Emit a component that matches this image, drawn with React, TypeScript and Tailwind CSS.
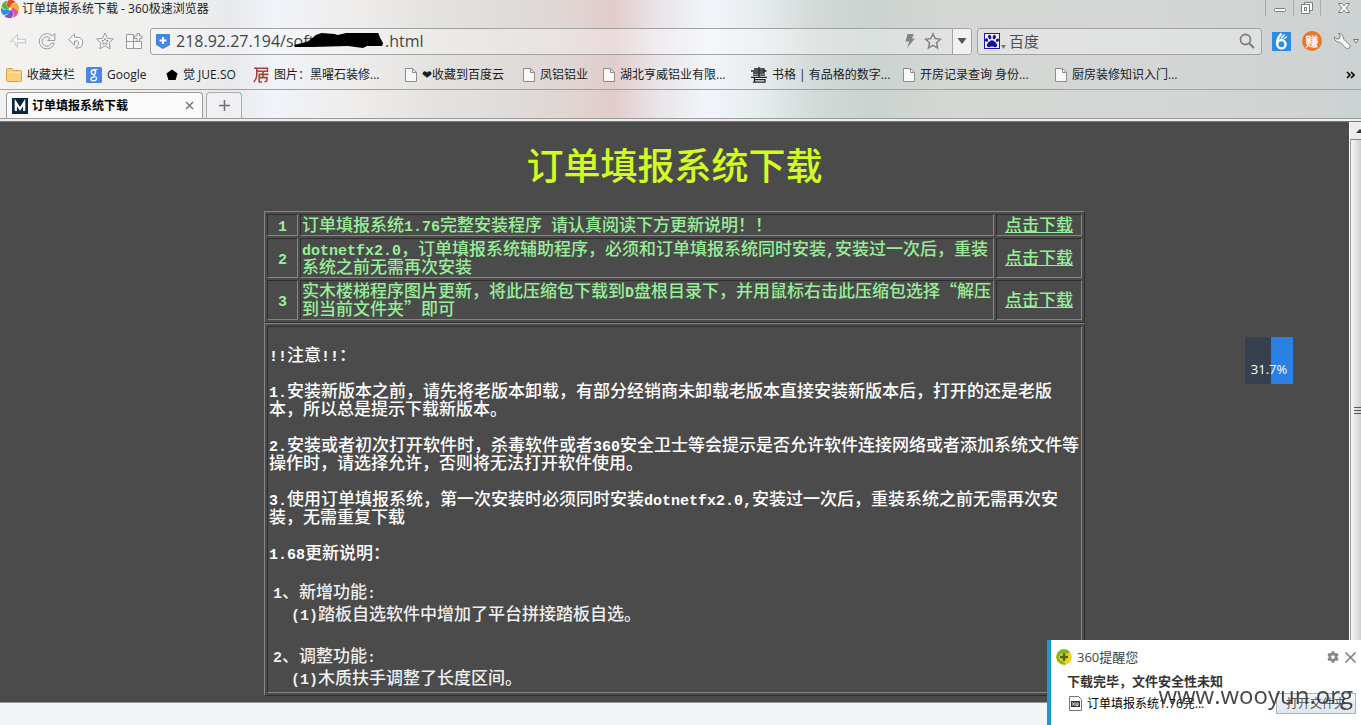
import React from "react";
import { FaPaw, FaCog } from "react-icons/fa";

const UI = "font-['Open_Sans','Noto_Sans_CJK_SC',sans-serif]";
const SONG = "font-['Noto_Sans_CJK_SC',sans-serif] font-medium";

/* Sets runs of half-width characters in a fixed-pitch face beside the full-width text. */
function Mixed({ children }: { children: string }) {
  const parts = children.split(/([\x20-\x7e]+)/).filter(Boolean);
  return (
    <>
      {parts.map((p, i) =>
        /^[\x20-\x7e]/.test(p) ? (
          <span key={i} className="font-['Liberation_Mono',monospace] text-[15px] leading-[0px] font-bold">
            {p}
          </span>
        ) : (
          <React.Fragment key={i}>{p}</React.Fragment>
        ),
      )}
    </>
  );
}

function Pinwheel() {
  const colors = ["#e8452c", "#f2b21b", "#e9569b", "#8b4fc0", "#2f8be0", "#5cb531"];
  return (
    <svg viewBox="-10 -10 20 20" className="size-[18px] shrink-0" aria-hidden="true">
      {colors.map((c, i) => (
        <path
          key={c}
          d="M0 0 C-2 -4 -1 -7 3 -9.4 C7 -8.5 9.2 -5.5 9.2 -3 C6 -5 3 -4 0 0Z"
          fill={c}
          transform={`rotate(${i * 60 - 30})`}
        />
      ))}
      <circle r="1.6" fill="#fff" />
    </svg>
  );
}

function PageIcon() {
  return (
    <svg viewBox="0 0 12 14" className="h-3.5 w-3 shrink-0" aria-hidden="true">
      <path d="M.5 .5H7.5L11.5 4.5V13.5H.5Z" fill="#f8f8f8" stroke="#8d8d8d" />
      <path d="M7.5 .5V4.5H11.5" fill="none" stroke="#8d8d8d" />
    </svg>
  );
}

function FolderIcon() {
  return (
    <svg viewBox="0 0 16 14" className="h-3.5 w-4 shrink-0" aria-hidden="true">
      <path d="M.5 1.5Q.5 .5 1.5 .5H6L7.5 2.5H14.5Q15.5 2.5 15.5 3.5V12.5Q15.5 13.5 14.5 13.5H1.5Q.5 13.5 .5 12.5Z" fill="#fbd078" stroke="#d9a043" />
      <path d="M1 4.5H15" stroke="#fde6ae" />
    </svg>
  );
}

function GoogleIcon() {
  return (
    <svg viewBox="0 0 16 16" className="size-4 shrink-0" aria-hidden="true">
      <rect width="16" height="16" rx="1.5" fill="#4a86e8" />
      <g fill="none" stroke="#fff">
        <ellipse cx="7.4" cy="5.2" rx="2.1" ry="2.3" strokeWidth="1.4" />
        <path d="M7.4 2.7H11.2M8.8 7.2Q7.2 8.2 8.8 9.2Q10.8 10.2 10.6 11.6" strokeWidth="1.2" />
        <path d="M10.6 11.6Q10.2 13.8 7.6 13.8Q4.8 13.6 4.9 11.8Q5.2 9.9 8.6 9.8" strokeWidth="1.3" />
      </g>
    </svg>
  );
}

function PentagonIcon() {
  return (
    <svg viewBox="0 0 12 12" className="size-3 shrink-0" aria-hidden="true">
      <path d="M6 .5L11.6 4.6L9.6 11H2.4L.4 4.6Z" fill="#000" />
    </svg>
  );
}

function SealIcon() {
  return (
    <svg viewBox="0 0 16 16" className="size-4 shrink-0" fill="none" stroke="#a8413a" strokeWidth="1.6" aria-hidden="true">
      <path d="M1 1.3H14.5V4.3H3.8M3.8 1.3V8Q3.5 12.5 .8 15M5.8 7.4H15.5M10 4.3V10.6M5.8 10.6H14V13Q13.8 15 11.5 14.8M6.2 7.4V15H9" />
    </svg>
  );
}

function BookIcon() {
  return (
    <svg viewBox="0 0 16 16" className="size-4 shrink-0" fill="none" stroke="#222" strokeWidth="1.3" aria-hidden="true">
      <path d="M3 2H13V6H2M0 4H15.5M2 8.2H14M0 10.3H16M8 0V10M4 12.7H14V15.2H2M3.5 10.5V15" />
    </svg>
  );
}

const bookmarks: { label: string; icon: React.ReactNode; width: string }[] = [
  { label: "收藏夹栏", icon: <FolderIcon />, width: "w-20" },
  { label: "Google", icon: <GoogleIcon />, width: "w-20" },
  { label: "觉 JUE.SO", icon: <PentagonIcon />, width: "w-[87px]" },
  { label: "图片：黑曜石装修...", icon: <SealIcon />, width: "w-[152px]" },
  { label: "❤收藏到百度云", icon: <PageIcon />, width: "w-[118px]" },
  { label: "凤铝铝业", icon: <PageIcon />, width: "w-20" },
  { label: "湖北亨威铝业有限...", icon: <PageIcon />, width: "w-[148px]" },
  { label: "书格 | 有品格的数字...", icon: <BookIcon />, width: "w-[152px]" },
  { label: "开房记录查询 身份...", icon: <PageIcon />, width: "w-[152px]" },
  { label: "厨房装修知识入门...", icon: <PageIcon />, width: "w-[152px]" },
];

const navIcons: { label: string; drawing: React.ReactNode }[] = [
  { label: "后退", drawing: <path d="M1.5 9L8.5 2.5V7.3H16.5V10.7H8.5V15.5L6.8 13.9V11.5L4.5 9Z" stroke="#c4c4c4" /> },
  { label: "刷新", drawing: <path d="M16.8 1.5V8.5H9.8L12.2 6.1A4.8 4.8 0 1 0 13.3 11.2H16.2A7.6 7.6 0 1 1 14.3 4Z" /> },
  { label: "撤销", drawing: <path d="M1.5 7.5L7.5 2V5.3H11A5.4 5.4 0 0 1 11 16H8.5L10.8 13.2A2.6 2.6 0 0 0 10.5 9H7.5V13Z" /> },
  {
    label: "收藏",
    drawing: (
      <>
        <path d="M9 1L11.5 6.4L17.3 7L13 11L14.2 16.8L9 13.8L3.8 16.8L5 11L.7 7L6.5 6.4Z" />
        <path d="M9 6.3L10 8.4L12.2 8.7L10.6 10.3L11 12.5L9 11.4L7 12.5L7.4 10.3L5.8 8.7L8 8.4Z" />
      </>
    ),
  },
  {
    label: "应用",
    drawing: <path d="M1.5 2.5H8.5V9.5H1.5ZM1.5 9.5H8.5V16.5H1.5ZM8.5 9.5H16.5V16.5H8.5ZM12 1.5H14.5V4H17V6.5H14.5V9.5H12V6.5H9.5V4H12Z" />,
  },
];

const iconButton = "flex items-center justify-center shrink-0";

function TitleBar() {
  return (
    <div className="flex h-[27px] items-start justify-between pl-px">
      <div className="flex items-center gap-[3px]">
        <Pinwheel />
        <span className="text-xs leading-[18px] text-[#222]">订单填报系统下载 - 360极速浏览器</span>
      </div>
      <div className="flex h-4 text-[#7d7d7d]">
        <button aria-label="最小化" className={`${iconButton} w-7 border-l border-[#aaa]`}>
          <svg viewBox="0 0 14 14" className="size-3.5" fill="#fff" stroke="currentColor">
            <rect x="1.5" y="7.5" width="11" height="3" rx="1" />
          </svg>
        </button>
        <button aria-label="还原" className={`${iconButton} w-7 border-x border-[#aaa]`}>
          <svg viewBox="0 0 14 14" className="size-3.5" fill="#fff" stroke="currentColor">
            <path d="M4.5 1.5H12.5V9.5H4.5Z" />
            <path d="M1.5 3.5H9.5V12.5H1.5Z" />
            <rect x="4.5" y="6.5" width="2" height="3" />
          </svg>
        </button>
        <button aria-label="关闭" className={`${iconButton} w-10 pl-1.5`}>
          <svg viewBox="0 0 14 14" className="size-3.5" fill="#fff" stroke="currentColor">
            <path d="M1.5 2.5H5L7 5L9 2.5H12.5L9 7L12.5 11.5H9L7 9L5 11.5H1.5L5 7Z" />
          </svg>
        </button>
      </div>
    </div>
  );
}

function Toolbar() {
  return (
    <div className="flex h-7 items-center">
      <div className="flex w-[150px] shrink-0 items-center gap-[11px] pl-[9px]">
        {navIcons.map((n) => (
          <button key={n.label} aria-label={n.label} className={iconButton}>
            <svg viewBox="0 0 18 18" className="size-[18px]" fill="#f7f7f7" stroke="#999" strokeLinejoin="round">
              {n.drawing}
            </svg>
          </button>
        ))}
      </div>
      <div className="relative flex h-[27px] min-w-0 flex-1 items-center rounded-[3px] border border-[#a3a3a3] bg-white/30">
        <svg viewBox="0 0 14 15" className="ml-[5px] h-[15px] w-3.5 shrink-0" aria-hidden="true">
          <path d="M0 0H14V11L7 15L0 11Z" fill="#4488e2" />
          <path d="M7 3V10M3.5 6.5H10.5" stroke="#fff" strokeWidth="2" />
        </svg>
        <input
          aria-label="地址栏"
          type="text"
          defaultValue={"218.92.27.194/soft" + "\u00a0".repeat(17) + ".html"}
          className="ml-1.5 h-6 min-w-0 flex-1 bg-transparent text-base text-[#444] outline-none"
        />
        <svg viewBox="0 0 96 16" preserveAspectRatio="none" className="absolute top-[4px] left-[142px] h-4 w-[91px]" aria-hidden="true">
          <path d="M1 12L14 9L18 7L24 2L30 0L44 1L47 2L56 0L90 0L92 5L95 10L94 13L78 13L74 15L58 13L20 14L2 14Z" fill="#000" />
        </svg>
        <div className="flex shrink-0 items-center gap-2 pr-2.5">
          <button aria-label="极速模式">
            <svg viewBox="0 0 12 16" className="h-4 w-3" fill="#858585">
              <path d="M3.5 1H10L7.8 5.5H11L3 15L5.2 8.5H1.5Z" />
            </svg>
          </button>
          <button aria-label="添加收藏">
            <svg viewBox="0 0 18 18" className="size-[18px]" fill="none" stroke="#858585" strokeWidth="1.5">
              <path d="M9 1.8L11.2 6.6L16.4 7.2L12.5 10.7L13.6 16L9 13.3L4.4 16L5.5 10.7L1.6 7.2L6.8 6.6Z" />
            </svg>
          </button>
        </div>
        <button aria-label="地址列表" className={`${iconButton} h-full w-[19px] rounded-r-[2px] border-l border-[#a3a3a3] bg-white/50`}>
          <svg viewBox="0 0 10 6" className="h-1.5 w-2.5" fill="#555">
            <path d="M.5 0H9.5L5 6Z" />
          </svg>
        </button>
      </div>
      <div className="ml-[5px] flex h-[27px] w-[285px] shrink-0 items-center rounded-[3px] border border-[#a3a3a3] bg-white/30 px-1.5">
        <button aria-label="选择搜索引擎" className="flex items-end">
          <span className="flex size-4 items-center justify-center border border-[#1a1aa8] bg-[#f4f4ff]">
            <FaPaw className="size-3.5 text-[#1010a8]" />
          </span>
          <svg viewBox="0 0 5 4" className="ml-px h-1 w-[5px]" fill="#777">
            <path d="M0 0H5L2.5 4Z" />
          </svg>
        </button>
        <input
          aria-label="搜索"
          type="text"
          placeholder="百度"
          className="ml-[3px] h-6 min-w-0 flex-1 bg-transparent text-[15px] outline-none placeholder:text-[#4f4f4f]"
        />
        <button aria-label="搜索" className={iconButton}>
          <svg viewBox="0 0 16 16" className="size-4" fill="none" stroke="#808080" strokeWidth="1.8">
            <circle cx="6.5" cy="6.5" r="5" />
            <path d="M10.2 10.2L15 15" strokeWidth="2.2" />
          </svg>
        </button>
      </div>
      <div className="flex w-[99px] shrink-0 items-center gap-[11px] pl-2.5">
        <button aria-label="安全" className={iconButton}>
          <svg viewBox="0 0 19 19" className="size-[19px]">
            <rect width="19" height="19" fill="#2d8be4" />
            <path d="M9.5 1.5Q5 6 5 12" fill="none" stroke="#fff" strokeWidth="2.4" />
            <circle cx="9.4" cy="12.2" r="4.2" fill="none" stroke="#fff" strokeWidth="2.4" />
            <path d="M9 6.5L12.5 2.5M11.5 7L15 4.5" stroke="#fff" strokeWidth="1.5" />
          </svg>
        </button>
        <button aria-label="赚钱" className="flex size-5 shrink-0 items-center justify-center rounded-full bg-[#e8762b] text-[13px] leading-none font-bold text-white">
          赚
        </button>
        <button aria-label="工具" className="flex shrink-0 items-center gap-0.5">
          <svg viewBox="0 0 18 18" className="size-[18px]" fill="#f7f7f7" stroke="#858585" strokeLinejoin="round">
            <path d="M5.5 1.3A5 5 0 0 1 10.4 7L16.8 13Q17.6 14.8 16 16.5Q14.2 17.4 12.8 16L7 10.2A5 5 0 0 1 1.2 5L4 7.2L6.8 6.3L7.2 3.6Z" />
          </svg>
          <svg viewBox="0 0 6 5" className="h-[5px] w-1.5" fill="#fff" stroke="#777">
            <path d="M.5 .5H5.5L3 4Z" />
          </svg>
        </button>
      </div>
    </div>
  );
}

function Bookmarks() {
  return (
    <nav aria-label="收藏夹" className="flex h-[35px] items-center justify-between border-b border-[#a2a2a2] pt-1.5 pr-1.5 pb-px pl-1.5">
      <div className="flex min-w-0 overflow-hidden">
        {bookmarks.map((b) => (
          <a key={b.label} href="#" className={`flex shrink-0 items-center gap-[5px] text-xs leading-5 whitespace-nowrap text-[#1c1c1c] ${b.width}`}>
            {b.icon}
            {b.label}
          </a>
        ))}
      </div>
      <button aria-label="更多收藏" className={iconButton}>
        <svg viewBox="0 0 9 8" className="h-2 w-[9px]" fill="none" stroke="#000" strokeWidth="1.6">
          <path d="M1 1L4 4L1 7M5 1L8 4L5 7" />
        </svg>
      </button>
    </nav>
  );
}

function TabStrip() {
  return (
    <div className="flex h-[29px] items-end gap-[3px] border-b border-[#999] pl-1.5">
      <div className="flex h-[26px] w-[197px] items-center rounded-t-[4px] border border-b-0 border-[#9a9a9a] bg-[#fafafa] pr-2 pl-[5px]">
        <svg viewBox="0 0 16 16" className="size-4 shrink-0" aria-hidden="true">
          <rect width="16" height="16" fill="#06283f" />
          <path d="M3.8 13V4.5L8 11L12.2 4.5V13" fill="none" stroke="#fff" strokeWidth="2.2" />
        </svg>
        <span className="ml-1 flex-1 text-xs font-bold text-black">订单填报系统下载</span>
        <button aria-label="关闭标签页" className={iconButton}>
          <svg viewBox="0 0 9 9" className="size-[9px]" stroke="#777" strokeWidth="1.5">
            <path d="M1 1L8 8M8 1L1 8" />
          </svg>
        </button>
      </div>
      <button aria-label="新建标签页" className={`${iconButton} h-[26px] w-9 rounded-t-[4px] border border-b-0 border-[#aaa] bg-white/30`}>
        <svg viewBox="0 0 11 11" className="size-[11px]" stroke="#707070" strokeWidth="1.6">
          <path d="M5.5 0V11M0 5.5H11" />
        </svg>
      </button>
    </div>
  );
}

const downloads = [
  "订单填报系统1.76完整安装程序 请认真阅读下方更新说明！！",
  "dotnetfx2.0，订单填报系统辅助程序，必须和订单填报系统同时安装,安装过一次后，重装系统之前无需再次安装",
  "实木楼梯程序图片更新，将此压缩包下载到D盘根目录下，并用鼠标右击此压缩包选择“解压到当前文件夹”即可",
];

const notes = [
  "!!注意!!：",
  "1.安装新版本之前，请先将老版本卸载，有部分经销商未卸载老版本直接安装新版本后，打开的还是老版本，所以总是提示下载新版本。",
  "2.安装或者初次打开软件时，杀毒软件或者360安全卫士等会提示是否允许软件连接网络或者添加系统文件等操作时，请选择允许，否则将无法打开软件使用。",
  "3.使用订单填报系统，第一次安装时必须同时安装dotnetfx2.0,安装过一次后，重装系统之前无需再次安装，无需重复下载",
  "1.68更新说明：",
];

const changes = [
  { title: "1、新增功能:", item: "(1)踏板自选软件中增加了平台拼接踏板自选。" },
  { title: "2、调整功能:", item: "(1)木质扶手调整了长度区间。" },
];

const outset = "border border-t-[#858585] border-l-[#858585] border-r-[#2e2e2e] border-b-[#2e2e2e]";
const inset = "border border-t-[#2e2e2e] border-l-[#2e2e2e] border-r-[#858585] border-b-[#858585]";

function Content() {
  return (
    <main className={`flex-1 bg-[#4b4b4b] pb-[5px] ${SONG}`}>
      <h1 className="pt-[17px] text-center text-[37px] leading-[50px] font-medium text-[#d2fb21]">订单填报系统下载</h1>
      <div className="mx-auto mt-[22px] w-[821px] max-w-full">
        <table className={`w-full table-fixed border-separate border-spacing-0.5 text-[17px] leading-[18px] text-[#98ee98] ${outset}`}>
          <colgroup>
            <col className="w-[31px]" />
            <col />
            <col className="w-[86px]" />
          </colgroup>
          <tbody>
            {downloads.map((d, i) => (
              <tr key={d}>
                <td className={`px-px pt-0 pb-0.5 text-center ${inset}`}>
                  <Mixed>{String(i + 1)}</Mixed>
                </td>
                <td className={`px-px pt-0 pb-0.5 ${inset}`}>
                  <Mixed>{d}</Mixed>
                </td>
                <td className={`px-px pt-0 pb-0.5 text-center ${inset}`}>
                  <a href="#" className="underline">
                    点击下载
                  </a>
                </td>
              </tr>
            ))}
          </tbody>
        </table>
        <table className={`w-full border-separate border-spacing-0.5 text-[17px] leading-[18px] text-white ${outset}`}>
          <tbody>
            <tr>
              <td className={`px-px pt-[18px] pb-1 ${inset}`}>
                {notes.map((n) => (
                  <p key={n} className="mb-[18px]">
                    <Mixed>{n}</Mixed>
                  </p>
                ))}
                <div className="flex flex-col gap-5 pt-px pl-1 leading-[22px] text-[#eee]">
                  {changes.map((c) => (
                    <div key={c.title}>
                      <p>
                        <Mixed>{c.title}</Mixed>
                      </p>
                      <p className="pl-[18px]">
                        <Mixed>{c.item}</Mixed>
                      </p>
                    </div>
                  ))}
                </div>
              </td>
            </tr>
          </tbody>
        </table>
      </div>
    </main>
  );
}

function ScrollTrack() {
  return (
    <div className="flex w-3 shrink-0 flex-col overflow-hidden border-l border-white bg-[#ececec]">
      <div className="flex h-[18px] shrink-0 items-center justify-end border-b border-[#888]">
        <svg viewBox="0 0 5 4" className="h-1 w-[5px]" fill="#333" aria-hidden="true">
          <path d="M0 4L4 0L5 1V4Z" />
        </svg>
      </div>
      <div className="flex flex-1 items-center justify-end rounded-l-[2px] border-l border-[#999] bg-linear-to-r from-[#f8f8f8] to-[#cfcfcf] pb-5">
        <svg viewBox="0 0 8 10" className="h-2.5 w-2" stroke="#555" aria-hidden="true">
          <path d="M1 1.5H8M1 4.5H8M1 7.5H8" />
        </svg>
      </div>
    </div>
  );
}

function Notice() {
  return (
    <aside className="fixed right-0 bottom-0 h-[85px] w-[314px] border-l-4 border-[#1c9bc9] bg-white pt-2 pr-[5px] text-[#333]">
      <div className="flex h-[18px] items-center pl-[5px]">
        <svg viewBox="0 0 16 16" className="size-4" aria-hidden="true">
          <circle cx="8" cy="8" r="7.8" fill="#f6d11c" />
          <path d="M1 5A7.6 7.6 0 0 1 14 3L11 5A5 5 0 0 0 3 8Q3 12 8 13L10 15.5A7.8 7.8 0 0 1 1 5Z" fill="#7fb81e" />
          <path d="M8 4V12M4 8H12" stroke="#4d6410" strokeWidth="2.4" />
        </svg>
        <span className="ml-[5px] flex-1 text-[13px] leading-[18px] text-[#444]">360提醒您</span>
        <button aria-label="设置">
          <FaCog className="size-3 text-[#888]" />
        </button>
        <button aria-label="关闭提醒" className="ml-1.5">
          <svg viewBox="0 0 11 11" className="size-[11px]" stroke="#888" strokeWidth="1.6">
            <path d="M.5 .5L10.5 10.5M10.5 .5L.5 10.5" />
          </svg>
        </button>
      </div>
      <p className="mt-1.5 pl-4 text-[13px] leading-[18px] font-bold">下载完毕，文件安全性未知</p>
      <div className="mt-[3px] flex items-center pl-[18px] text-xs">
        <svg viewBox="0 0 13 15" className="h-[15px] w-[13px]" aria-hidden="true">
          <path d="M.5 .5H9.5L12.5 3.5V14.5H.5Z" fill="#fff" stroke="#777" />
          <rect x="2" y="5" width="9" height="6" fill="#333" />
          <path d="M3.5 6.5L5.5 9.5M5.5 6.5L3.5 9.5M7 6.5V9.5H9V6.5" stroke="#fff" fill="none" />
        </svg>
        <span className="ml-[5px] flex-1 text-black">订单填报系统1.76完...</span>
        <button className="h-[21px] w-20 border border-[#a8b4c0] bg-linear-to-b from-[#f2f6fa] to-[#dde6ee] text-xs leading-none text-[#555]">打开文件夹</button>
      </div>
    </aside>
  );
}

export default function App() {
  return (
    <div className={`flex min-h-screen flex-col bg-[#f1f5f8] ${UI}`}>
      <header className="bg-[linear-gradient(90deg,#f3f2f0_0%,#efefee_12%,#e8e9ec_17%,#f0f3f8_20%,#eeedec_26%,#e4e2df_32%,#dfdbd8_38%,#e0d5d3_42%,#e2cbcb_45%,#e8e2e6_48%,#f1f5fa_52%,#e6ebed_56%,#d2d9d7_60%,#cbd3cf_64%,#d5d7d4_70%,#d3d6d4_85%,#cdd2d2_100%)]">
        <TitleBar />
        <Toolbar />
        <Bookmarks />
        <TabStrip />
        <div className="h-[3px] border-b border-[#777] bg-[#eee]" />
      </header>
      <div className="mb-[22px] flex flex-1 border-b border-[#999]">
        <Content />
        <ScrollTrack />
      </div>
      <div className="fixed top-[337px] right-[68px] flex h-[47px] w-12 items-end justify-center bg-linear-to-r from-[#36404e] from-55% to-[#2b80e4] to-55% pb-1.5 text-[13px] leading-[18px] text-white">31.7%</div>
      <Notice />
      <div className="pointer-events-none fixed right-2 bottom-3 text-2xl leading-9 text-[#333]/90">www.wooyun.org</div>
    </div>
  );
}
